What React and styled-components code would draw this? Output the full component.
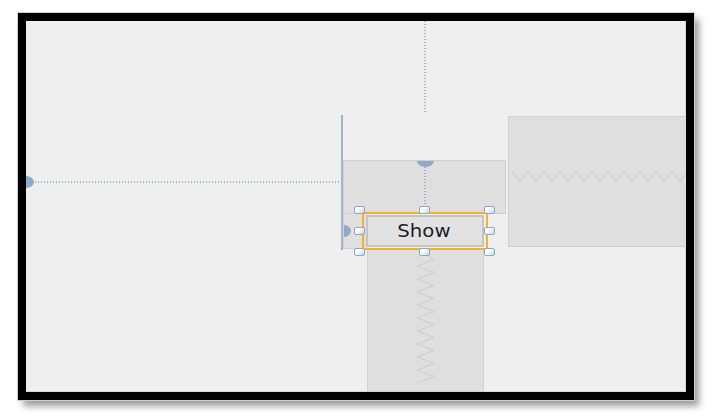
import React from 'react';
import styled, { createGlobalStyle } from 'styled-components';

const Global = createGlobalStyle`
  html, body { margin: 0; padding: 0; background: #fff; }
  body { font-family: "DejaVu Sans", "Open Sans", sans-serif; }
`;

const Page = styled.div`
  width: 723px;
  height: 417px;
  padding: 13px 0 0 18px;
  box-sizing: border-box;
`;

const Frame = styled.div`
  width: 676px;
  height: 387px;
  box-sizing: border-box;
  border: 8px solid #000;
  box-shadow: 0 0 0 1px #cfcfcf, 5px 6px 7px rgba(0, 0, 0, 0.4);
`;

/* the designer surface: grid lines sit on the edges of the controls */
const Canvas = styled.div`
  display: grid;
  grid-template-columns: 315px 2px 19px 5px 117px 4px 18px 2px 1fr;
  grid-template-rows: 94px 45px 21px 2px 29px 38px 1fr;
  width: 100%;
  height: 100%;
  overflow: hidden;
  background: #efefef;
  box-shadow: inset -1px -1px 0 #d6d6d6;
`;

const dots = (dir) =>
  `repeating-linear-gradient(${dir}, #9db5d0 0 1.5px, transparent 1.5px 3px)`;

const TopGuide = styled.div`
  grid-column: 4 / 7;
  grid-row: 1 / 2;
  justify-self: center;
  width: 2px;
  height: 92px;
  background: ${dots('to bottom')};
`;

const SideGuide = styled.div`
  grid-column: 1 / 2;
  grid-row: 4 / 5;
  position: relative;
  background: ${dots('to right')};

  &::before {
    content: '';
    position: absolute;
    left: -8px;
    top: -5px;
    width: 16px;
    height: 12px;
    border-radius: 50%;
    background: #8eaac8;
  }
`;

const Rail = styled.div`
  grid-column: 2 / 3;
  grid-row: 2 / 7;
  background: #9fb4cd;
`;

const Block = styled.div`
  position: relative;
  box-sizing: border-box;
  overflow: hidden;
  background: #dfdfdf;
  border: 1px solid #d0d0d0;
`;

const HeaderBlock = styled(Block)`
  grid-column: 3 / 8;
  grid-row: 3 / 6;
  margin-bottom: -2px;
  display: flex;
  flex-direction: column;
  align-items: center;

  &::before {
    content: '';
    position: absolute;
    left: 50%;
    top: -6px;
    width: 17px;
    height: 12px;
    margin-left: -8px;
    border-radius: 50%;
    background: #8eaac8;
  }
`;

const InnerGuide = styled.div`
  width: 2px;
  height: 47px;
  background: ${dots('to bottom')};
`;

const SideBlock = styled(Block)`
  grid-column: 3 / 5;
  grid-row: 6 / 7;
  margin: 1px 0 1px;
  border-right: none;

  &::before {
    content: '';
    position: absolute;
    left: -9px;
    top: 50%;
    width: 16px;
    height: 12px;
    margin-top: -6px;
    border-radius: 50%;
    background: #8eaac8;
  }
`;

const RightBlock = styled(Block)`
  grid-column: 9 / 10;
  grid-row: 2 / 7;
  width: 200px;
  margin: 1px 0 3px;
  display: flex;
  align-items: center;
  padding: 0 0 10px 3px;
`;

const BottomBlock = styled(Block)`
  grid-column: 5 / 6;
  grid-row: 7 / 8;
  margin-top: -2px;
  display: flex;
  justify-content: center;
  padding-top: 4px;
`;

const Selection = styled.div`
  grid-column: 4 / 7;
  grid-row: 6 / 7;
  position: relative;
  box-sizing: border-box;
  border: 2px solid #f4b12e;
  padding: 1px 2px;
  display: flex;
`;

const Button = styled.div`
  flex: 1;
  display: flex;
  align-items: center;
  justify-content: center;
  box-sizing: border-box;
  border: 2px solid #c4c4c4;
  background: #e2e2e2;
  color: #1c1c2a;
`;

const Caption = styled.span`
  display: inline-block;
  font-size: 17px;
  transform: scaleX(1.16);
  margin-right: 2px;
`;

/* resize handles overlay the selection on a 3x3 grid */
const Handles = styled.div`
  position: absolute;
  inset: -8px -9px -8px -10px;
  display: grid;
  grid-template-columns: repeat(3, 11px);
  grid-template-rows: repeat(3, 8px);
  justify-content: space-between;
  align-content: space-between;
  pointer-events: none;
`;

const Handle = styled.div`
  box-sizing: border-box;
  border: 1px solid #8ea7c4;
  border-radius: 2px;
  background: linear-gradient(135deg, #ffffff 35%, #c5d4e5 100%);
  visibility: ${(p) => (p.$hidden ? 'hidden' : 'visible')};
`;

const zigH = (len, step, amp) => {
  let d = 'M0 0';
  let up = false;
  for (let x = step / 2; x <= len; x += step / 2) {
    d += ` L${x} ${up ? 0 : amp}`;
    up = !up;
  }
  return d;
};

const zigV = (len, step, amp) => {
  let d = `M${amp / 2} 0`;
  let left = false;
  for (let y = step / 2; y <= len; y += step / 2) {
    d += ` L${left ? 0 : amp} ${y}`;
    left = !left;
  }
  return d;
};

export default function App() {
  return (
    <Page>
      <Global />
      <Frame>
        <Canvas>
          <TopGuide />
          <SideGuide />
          <RightBlock>
            <svg width="200" height="13">
              <path d={zigH(200, 16, 11)} fill="none" stroke="#cfcfcf" strokeWidth="1.2" transform="translate(0 1)" />
            </svg>
          </RightBlock>
          <HeaderBlock>
            <InnerGuide />
          </HeaderBlock>
          <SideBlock />
          <Rail />
          <BottomBlock>
            <svg width="17" height="140">
              <path d={zigV(136, 13, 16)} fill="none" stroke="#cfcfcf" strokeWidth="1.2" transform="translate(0.5 0)" />
            </svg>
          </BottomBlock>
          <Selection>
            <Button>
              <Caption>Show</Caption>
            </Button>
            <Handles>
              {Array.from({ length: 9 }, (_, i) => (
                <Handle key={i} $hidden={i === 4} />
              ))}
            </Handles>
          </Selection>
        </Canvas>
      </Frame>
    </Page>
  );
}
